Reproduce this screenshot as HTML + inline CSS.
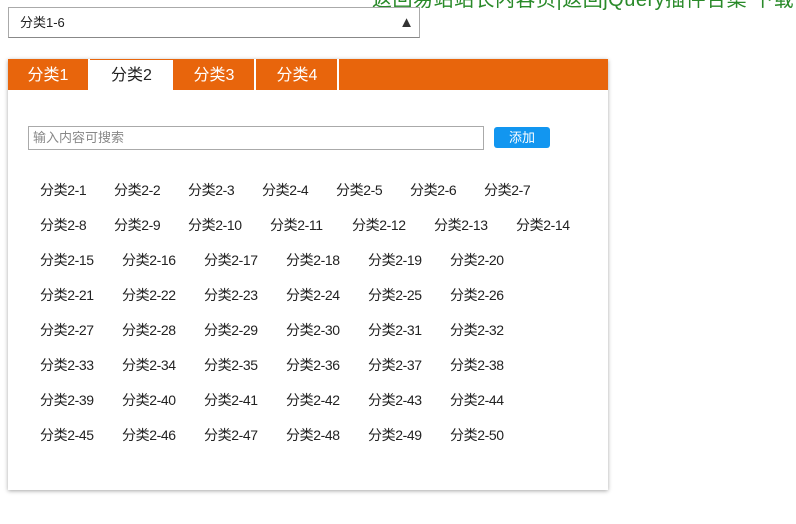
<!DOCTYPE html>
<html><head><meta charset="utf-8"><style>
*{margin:0;padding:0;box-sizing:border-box}
body{width:796px;height:524px;background:#fff;position:relative;overflow:hidden;font-family:"Liberation Sans","Noto Sans CJK SC",sans-serif;color:#222}
.top{position:absolute;left:372px;top:-17px;font-size:20px;color:#2a8a2a;white-space:nowrap;letter-spacing:0.5px}
.sel{position:absolute;left:8px;top:7px;width:412px;height:31px;border:1px solid #aaa;border-bottom-color:#888;font-size:13px;line-height:29px;padding-left:11px}
.sel .ar{position:absolute;right:5px;top:0;font-size:15px;color:#333}
.panel{position:absolute;left:8px;top:59px;width:600px;height:431px;background:#fff;box-shadow:0 1px 4px rgba(0,0,0,.35)}
.tabs{height:31px;background:#e8650c;position:relative}
.tab{position:absolute;top:0;width:82px;height:31px;color:#fff;font-size:16px;line-height:33px;text-align:center;border-right:2px solid #fff}
.tab.on{background:#fff;color:#222;border-right:none;top:1px;line-height:31px}
.inp{position:absolute;left:20px;top:67px;width:456px;height:24px;border:1px solid #aaa;font-size:13px;color:#888;line-height:22px;padding-left:4px}
.btn{position:absolute;left:486px;top:68px;width:56px;height:21px;background:#1296f0;border-radius:3px;color:#fff;font-size:13px;line-height:21px;text-align:center}
.it{position:absolute;font-size:14px;white-space:nowrap;letter-spacing:-0.4px}
</style></head><body>
<div class="top">返回易站站长内容页|返回jQuery插件合集 下载</div>
<div class="sel">分类1-6<span class="ar">▲</span></div>
<div class="panel">
<div class="tabs">
<div class="tab" style="left:0">分类1</div>
<div class="tab on" style="left:82px;width:83px">分类2</div>
<div class="tab" style="left:166px">分类3</div>
<div class="tab" style="left:249px">分类4</div>
</div>
<div class="inp">输入内容可搜索</div>
<div class="btn">添加</div>
</div>
<div class="panel" style="box-shadow:none;background:transparent">
<span class="it" style="left:32px;top:121px">分类2-1</span>
<span class="it" style="left:106px;top:121px">分类2-2</span>
<span class="it" style="left:180px;top:121px">分类2-3</span>
<span class="it" style="left:254px;top:121px">分类2-4</span>
<span class="it" style="left:328px;top:121px">分类2-5</span>
<span class="it" style="left:402px;top:121px">分类2-6</span>
<span class="it" style="left:476px;top:121px">分类2-7</span>
<span class="it" style="left:32px;top:156px">分类2-8</span>
<span class="it" style="left:106px;top:156px">分类2-9</span>
<span class="it" style="left:180px;top:156px">分类2-10</span>
<span class="it" style="left:262px;top:156px">分类2-11</span>
<span class="it" style="left:344px;top:156px">分类2-12</span>
<span class="it" style="left:426px;top:156px">分类2-13</span>
<span class="it" style="left:508px;top:156px">分类2-14</span>
<span class="it" style="left:32px;top:191px">分类2-15</span>
<span class="it" style="left:114px;top:191px">分类2-16</span>
<span class="it" style="left:196px;top:191px">分类2-17</span>
<span class="it" style="left:278px;top:191px">分类2-18</span>
<span class="it" style="left:360px;top:191px">分类2-19</span>
<span class="it" style="left:442px;top:191px">分类2-20</span>
<span class="it" style="left:32px;top:226px">分类2-21</span>
<span class="it" style="left:114px;top:226px">分类2-22</span>
<span class="it" style="left:196px;top:226px">分类2-23</span>
<span class="it" style="left:278px;top:226px">分类2-24</span>
<span class="it" style="left:360px;top:226px">分类2-25</span>
<span class="it" style="left:442px;top:226px">分类2-26</span>
<span class="it" style="left:32px;top:261px">分类2-27</span>
<span class="it" style="left:114px;top:261px">分类2-28</span>
<span class="it" style="left:196px;top:261px">分类2-29</span>
<span class="it" style="left:278px;top:261px">分类2-30</span>
<span class="it" style="left:360px;top:261px">分类2-31</span>
<span class="it" style="left:442px;top:261px">分类2-32</span>
<span class="it" style="left:32px;top:296px">分类2-33</span>
<span class="it" style="left:114px;top:296px">分类2-34</span>
<span class="it" style="left:196px;top:296px">分类2-35</span>
<span class="it" style="left:278px;top:296px">分类2-36</span>
<span class="it" style="left:360px;top:296px">分类2-37</span>
<span class="it" style="left:442px;top:296px">分类2-38</span>
<span class="it" style="left:32px;top:331px">分类2-39</span>
<span class="it" style="left:114px;top:331px">分类2-40</span>
<span class="it" style="left:196px;top:331px">分类2-41</span>
<span class="it" style="left:278px;top:331px">分类2-42</span>
<span class="it" style="left:360px;top:331px">分类2-43</span>
<span class="it" style="left:442px;top:331px">分类2-44</span>
<span class="it" style="left:32px;top:366px">分类2-45</span>
<span class="it" style="left:114px;top:366px">分类2-46</span>
<span class="it" style="left:196px;top:366px">分类2-47</span>
<span class="it" style="left:278px;top:366px">分类2-48</span>
<span class="it" style="left:360px;top:366px">分类2-49</span>
<span class="it" style="left:442px;top:366px">分类2-50</span>
</div>
</body></html>
